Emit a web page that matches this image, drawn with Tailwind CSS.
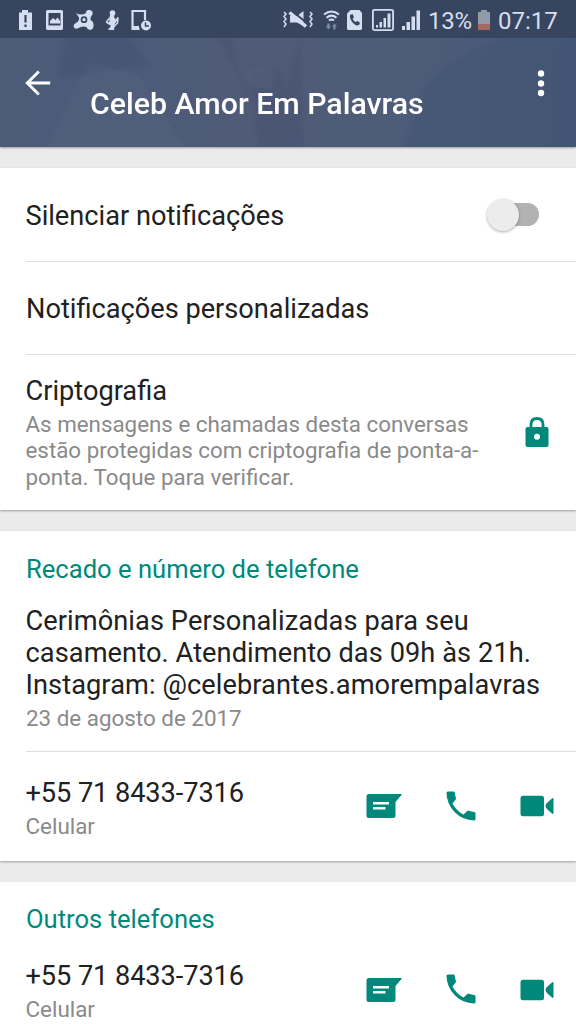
<!DOCTYPE html>
<html lang="pt-BR">
<head>
<meta charset="utf-8">
<title>Celeb Amor Em Palavras</title>
<script src="https://cdn.jsdelivr.net/npm/@tailwindcss/browser@4"></script>
</head>
<body class="w-[576px] h-[1024px] overflow-hidden bg-[#ebebeb] font-['Roboto','Liberation_Sans',sans-serif] text-[27.200px] text-[#212121]">
<svg class="hidden">
  <symbol id="msg" viewBox="0 0 36 26"><path fill="#00897b" d="M3 1H35.500V2L29.500 9V22.500Q29.500 25 27 25H3Q.5 25 .5 22.500V3.500Q.5 1 3 1Z"/><path stroke="#fff" stroke-width="2.600" d="M7 10.300H23M7 15.300H19.500"/></symbol>
  <symbol id="call" viewBox="0 0 30 30"><path fill="#00897b" d="M1.800.5H7.300Q8.600.5 8.800 1.800 9 4.500 9.900 7 10.200 8 9.500 8.800L6.400 12.400Q10.500 19.800 17.600 23.500L21.300 20.100Q22 19.400 23 19.800 25.500 20.700 28.200 20.900 29.500 21 29.500 22.300V28Q29.500 29.500 28 29.500 16.700 29.300 8.800 21.300.8 13.300.5 2 .5.5 1.800.5Z"/></symbol>
  <symbol id="video" viewBox="0 0 34 22"><path fill="#00897b" d="M3 .7H21.500Q24 .7 24 3.200V18.800Q24 21.300 21.500 21.300H3Q.5 21.300.5 18.800V3.200Q.5.700 3 .7ZM25.500 11Q25.700 8.500 28 7L32 3.500Q33.500 2.500 33.500 4V18Q33.500 19.500 32 18.500L28 15Q25.700 13.500 25.500 11Z"/></symbol>
</svg>

<header class="flex h-[147px] flex-col bg-[#4b5a78] shadow-[0_1px_2px_#00000055]">
  <div class="flex h-[38px] shrink-0 items-center bg-[#38455f] text-[24px] text-[#d5def0]">
    <svg class="h-[38px] w-[424px] shrink-0" viewBox="0 0 424 38" fill="#d5def0">
      <path d="M19 12.500H22V10H28V12.500H32V30H19Z"/>
      <path d="M25.500 15V22.500M25.500 24.500V27" stroke="#38455f" stroke-width="2.200"/>
      <path fill-rule="evenodd" d="M47.500 10H61.500Q63 10 63 11.500V28.500Q63 30 61.500 30H47.500Q46 30 46 28.500V11.500Q46 10 47.500 10ZM48.500 13V25.500H60.500V13Z"/>
      <path d="M50 23.500V21L53 18 55.500 20 57.500 17.500 60 21V23.500Z"/>
      <path d="M76 13Q81 16 86 13 86 9.500 89.500 10 93.500 10.500 92.500 14.500 90.500 16 90.500 20 94 21.500 93.500 25.500 93.500 29.500 90 30 87 29.500 86.500 27 82 25.500 78.500 28 75 30 73.500 26.500 73.500 24 76.500 22.500 79.500 21 79 17.500Z"/>
      <circle cx="84" cy="19.700" r="2.500" fill="#d5def0" stroke="#38455f" stroke-width="1.700"/>
      <circle cx="112.500" cy="13" r="2.800"/>
      <path d="M110.500 14H114.500L114 17 116 20 114.800 24 114 30H110L110.500 25 107 23.500 109.500 21.500 109.500 17Z"/>
      <path d="M109.500 18L106.500 22 110 24.500M114.500 23L118 17.500 117.500 23 114 26.500 108.500 29.500" fill="none" stroke="#d5def0" stroke-width="1.500"/>
      <path d="M139.500 29H132.500V11H145V20" fill="none" stroke="#d5def0" stroke-width="2.200"/>
      <path d="M132 26H139V30H132Z"/>
      <circle cx="146" cy="25.500" r="5"/>
      <path d="M145.500 22.500V26H149" fill="none" stroke="#38455f" stroke-width="1.500"/>
      <path d="M284 12L286 14 284 16.500 286 19 284 21.500 286 24 284 27M310 12L312 14 310 16.500 312 19 310 21.500 312 24 310 27" fill="none" stroke="#d5def0" stroke-width="1.500"/>
      <path d="M290 16H297L303.500 11V26L297 22.500H290Z"/>
      <path d="M291.500 10.500L308 24" stroke="#38455f" stroke-width="2"/>
      <path d="M289.500 12.500L306 26.500" stroke="#d5def0" stroke-width="3.500"/>
      <path d="M324 14.500Q331.500 8.500 339 14.500M326.500 17.700Q331.500 13.500 336.500 17.700M329 20.600Q331.500 18.500 334 20.600" fill="none" stroke="#d5def0" stroke-width="2"/>
      <path d="M328.500 29.500L325.700 26.500H327.300V23.500H329.700V26.500H331ZM334.500 23.500L337 26.500H335.500V29.500H333.300V26.500H332Z" fill="#7d8ba4"/>
      <path d="M350.500 10H359.500L362 13V28.500Q362 30 360.500 30H348.500Q347 30 347 28.500V13.500Z"/>
      <path d="M350 15L352.500 14 354 17 352.700 18.800Q353.500 21 355.500 22L357.500 20.900 360 22.700 359 25Q356 26.500 352.500 22.500 349.500 18.500 350 15Z" fill="#38455f"/>
      <rect x="372.900" y="9.900" width="20.200" height="20.200" rx="1.500" fill="none" stroke="#d5def0" stroke-width="1.800"/>
      <path d="M376 25H378V27.500H376ZM379.500 22H382V27.500H379.500ZM383.500 18H386V27.500H383.500ZM387.500 13.500H390.500V27.500H387.500ZM402 26H405V30H402ZM406.500 22H410V30H406.500ZM411.500 16.500H415V30H411.500ZM416.500 10.500H420V30H416.500Z"/>
    </svg>
    <span class="ml-[4px] w-[50px] whitespace-nowrap pt-[3px] leading-[38px] tracking-[-0.3px]">13%</span>
    <svg class="mt-[2px] h-[22px] w-[12px] shrink-0" viewBox="0 0 12 22"><path fill="#929ca8" d="M0 3H3V1H9V3H12V15H0Z"/><path fill="#a66961" d="M0 15H12V21H0Z"/></svg>
    <span class="ml-[8px] whitespace-nowrap pt-[3px] leading-[38px]">07:17</span>
  </div>
  <div class="relative h-[109px] overflow-hidden">
    <svg class="absolute inset-0" width="576" height="110" viewBox="0 0 576 110">
      <defs><linearGradient id="sky"><stop offset="0" stop-color="#4c5b78"/><stop offset=".2" stop-color="#4b5b79"/><stop offset=".45" stop-color="#505b77"/><stop offset=".7" stop-color="#4d5c78"/><stop offset="1" stop-color="#465677"/></linearGradient>
      <filter id="soft"><feGaussianBlur stdDeviation="1.500"/></filter></defs>
      <rect width="576" height="110" fill="url(#sky)"/>
      <g filter="url(#soft)">
        <path d="M66 0H130L150 28 58 40ZM218 0H230L246 56 256 32 280 32 286 50 300 0 304 110H258L254 60Z" fill="#435170" opacity=".4"/>
        <path d="M45 110L78 43 92 25 140 38 185 110ZM246 35L260 28 277 35 270 51 252 50Z" fill="#5a6885" opacity=".25"/>
        <path d="M404 110L426 45Q460 15 510 0H576V110Z" fill="#415274" opacity=".4"/>
      </g>
    </svg>
    <div class="relative flex h-full">
      <svg class="ml-[25px] mt-[32px] h-[26px] w-[26px] shrink-0" viewBox="0 0 26 26" fill="none" stroke="#fff" stroke-width="2.900"><path d="M25.200 13H2.500M13.800 1.500L2.300 13 13.800 24.500"/></svg>
      <h1 class="ml-[39px] mt-[48px] w-[430px] whitespace-nowrap text-[30.300px] font-medium leading-[36px] text-white">Celeb Amor Em Palavras</h1>
      <svg class="ml-[16px] mt-[32px] h-[28px] w-[10px] shrink-0" viewBox="0 0 10 28" fill="#fff"><circle cx="5" cy="3.500" r="3.200"/><circle cx="5" cy="13.500" r="3.200"/><circle cx="5" cy="23" r="3.200"/></svg>
    </div>
  </div>
</header>

<main>
  <section class="mt-[21px] h-[342px] bg-white pl-[26px] shadow-[0_1px_2px_#00000055]">
    <div class="flex h-[94px] items-center justify-between border-b border-[#dedede] pr-[36px]">
      <span class="-ml-[0.5px] whitespace-nowrap pt-[3px]">Silenciar notificações</span>
      <span class="flex w-[53px] items-center"><span class="z-10 size-[32px] rounded-full bg-[#ececec] shadow-[0_1px_3px_#00000055]"></span><span class="-ml-[17px] h-[23px] w-[37px] rounded-full bg-[#b2b2b2]"></span></span>
    </div>
    <div class="flex h-[93px] items-center border-b border-[#dedede]"><span class="whitespace-nowrap pt-[3px]">Notificações personalizadas</span></div>
    <div class="flex justify-between pr-[27px] pt-[20px]">
      <div class="-ml-[0.5px]">
        <div class="leading-[32px]">Criptografia</div>
        <p class="mt-[4px] whitespace-nowrap text-[22.350px] leading-[26.400px] text-[#8a8a8a]">As mensagens e chamadas desta conversas<br>estão protegidas com criptografia de ponta-a-<br>ponta. Toque para verificar.</p>
      </div>
      <svg class="mt-[41px] h-[32px] w-[24px] shrink-0" viewBox="0 0 24 32"><path d="M6 13V8.500Q6 2.500 12 2.500T18 8.500V13" fill="none" stroke="#00897b" stroke-width="2.800"/><rect x=".5" y="11" width="23" height="20" rx="2" fill="#00897b"/><circle cx="12" cy="20.700" r="3" fill="#fff"/></svg>
    </div>
  </section>

  <section class="mt-[21px] h-[330px] bg-white pl-[26px] pt-[21px] shadow-[0_1px_2px_#00000055]">
    <h2 class="whitespace-nowrap text-[25.600px] leading-[34px] text-[#00897b]">Recado e número de telefone</h2>
    <div class="mt-[18px] h-[148px] border-b border-[#dedede]">
      <p class="-ml-[0.5px] whitespace-nowrap pt-px leading-[32px] tracking-[0.08px]">Cerimônias Personalizadas para seu<br>casamento. Atendimento das 09h às 21h.<br>Instagram: @celebrantes.amorempalavras</p>
      <p class="mt-[3px] text-[22.400px] leading-[28px] text-[#8a8a8a]">23 de agosto de 2017</p>
    </div>
    <div class="flex h-[109px] pt-[24px]">
      <div class="-ml-[0.5px] w-[340.5px]"><div class="whitespace-nowrap leading-[34px] tracking-[-0.08px]">+55 71 8433-7316</div><div class="mt-[3px] text-[22.400px] leading-[26px] text-[#8a8a8a]">Celular</div></div>
      <svg class="mt-[17px] h-[26px] w-[36px]"><use href="#msg"/></svg>
      <svg class="ml-[44px] mt-[15px] h-[30px] w-[30px]"><use href="#call"/></svg>
      <svg class="ml-[44px] mt-[19px] h-[22px] w-[34px]"><use href="#video"/></svg>
    </div>
  </section>

  <section class="mt-[21px] h-[142px] bg-white pl-[26px] pt-[20px]">
    <h2 class="whitespace-nowrap text-[25.600px] leading-[34px] text-[#00897b]">Outros telefones</h2>
    <div class="flex pt-[23px]">
      <div class="-ml-[0.5px] w-[340.5px]"><div class="whitespace-nowrap leading-[34px] tracking-[-0.08px]">+55 71 8433-7316</div><div class="mt-[3px] text-[22.400px] leading-[26px] text-[#8a8a8a]">Celular</div></div>
      <svg class="mt-[18px] h-[26px] w-[36px]"><use href="#msg"/></svg>
      <svg class="ml-[44px] mt-[15px] h-[30px] w-[30px]"><use href="#call"/></svg>
      <svg class="ml-[44px] mt-[20px] h-[22px] w-[34px]"><use href="#video"/></svg>
    </div>
  </section>
</main>
</body>
</html>
